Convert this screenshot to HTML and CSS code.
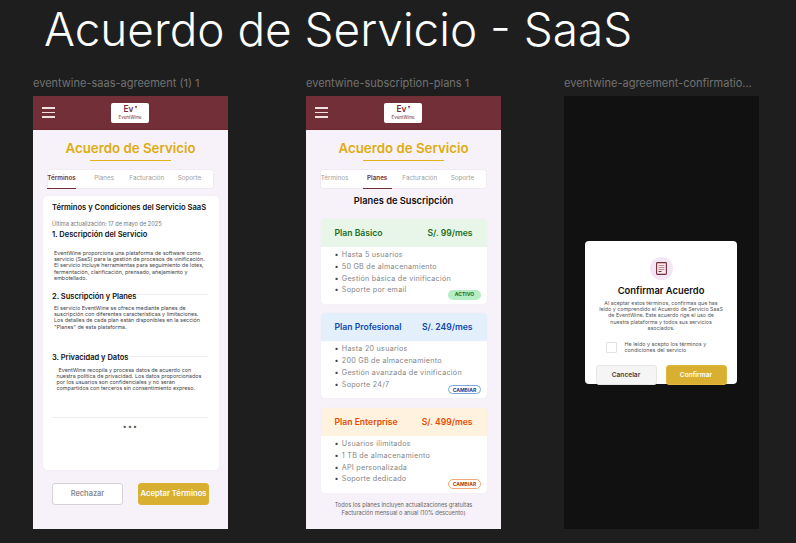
FILE: index.html
```html
<!DOCTYPE html>
<html lang="es">
<head>
<meta charset="utf-8">
<title>Acuerdo de Servicio - SaaS</title>
<link rel="stylesheet" href="styles.css">
</head>
<body>
<h1 class="page-title">Acuerdo de Servicio - SaaS</h1>

<section class="artboard board-a">
  <div class="board-label">eventwine-saas-agreement (1) 1</div>
  <div class="frame">
    <header class="topbar">
      <div class="burger"><span></span><span></span><span></span></div>
      <div class="logo"><div class="logo-ev">Ev<i></i></div><div class="logo-name">EventWine</div></div>
    </header>
    <h2 class="title">Acuerdo de Servicio</h2>
    <div class="rule"></div>
    <nav class="tabs">
      <span class="tab on">Términos</span><span class="tab">Planes</span><span class="tab">Facturación</span><span class="tab">Soporte</span>
    </nav>
    <article class="terms">
      <h3 class="terms-title">Términos y Condiciones del Servicio SaaS</h3>
      <p class="updated">Última actualización: 17 de mayo de 2025</p>
      <h4 class="sec sec-1">1. Descripción del Servicio</h4>
      <p class="para para-1">EventWine proporciona una plataforma de software como servicio (SaaS) para la gestión de procesos de vinificación. El servicio incluye herramientas para seguimiento de lotes, fermentación, clarificación, prensado, añejamiento y embotellado.</p>
      <div class="divider div-2"></div>
      <h4 class="sec sec-2">2. Suscripción y Planes</h4>
      <p class="para para-2">El servicio EventWine se ofrece mediante planes de suscripción con diferentes características y limitaciones. Los detalles de cada plan están disponibles en la sección "Planes" de esta plataforma.</p>
      <div class="divider div-3"></div>
      <h4 class="sec sec-3">3. Privacidad y Datos</h4>
      <p class="para para-3"><span class="indent">EventWine recopila y procesa datos de acuerdo con</span> nuestra política de privacidad. Los datos proporcionados por los usuarios son confidenciales y no serán compartidos con terceros sin consentimiento expreso.</p>
      <div class="divider div-4"></div>
      <div class="dots">•••</div>
    </article>
    <div class="actions">
      <button class="btn btn-reject">Rechazar</button>
      <button class="btn btn-accept">Aceptar Términos</button>
    </div>
  </div>
</section>

<section class="artboard board-b">
  <div class="board-label">eventwine-subscription-plans 1</div>
  <div class="frame">
    <header class="topbar">
      <div class="burger"><span></span><span></span><span></span></div>
      <div class="logo"><div class="logo-ev">Ev<i></i></div><div class="logo-name">EventWine</div></div>
    </header>
    <h2 class="title">Acuerdo de Servicio</h2>
    <div class="rule"></div>
    <nav class="tabs">
      <span class="tab">Términos</span><span class="tab on">Planes</span><span class="tab">Facturación</span><span class="tab">Soporte</span>
    </nav>
    <h3 class="plans-title">Planes de Suscripción</h3>

    <div class="plan">
      <div class="plan-head green"><span>Plan Básico</span><span>S/. 99/mes</span></div>
      <ul class="plan-list">
        <li>Hasta 5 usuarios</li><li>50 GB de almacenamiento</li><li>Gestión básica de vinificación</li><li>Soporte por email</li>
      </ul>
      <span class="badge active">ACTIVO</span>
    </div>
    <div class="plan">
      <div class="plan-head blue"><span>Plan Profesional</span><span>S/. 249/mes</span></div>
      <ul class="plan-list">
        <li>Hasta 20 usuarios</li><li>200 GB de almacenamiento</li><li>Gestión avanzada de vinificación</li><li>Soporte 24/7</li>
      </ul>
      <span class="badge change-blue">CAMBIAR</span>
    </div>
    <div class="plan">
      <div class="plan-head orange"><span>Plan Enterprise</span><span>S/. 499/mes</span></div>
      <ul class="plan-list">
        <li>Usuarios ilimitados</li><li>1 TB de almacenamiento</li><li>API personalizada</li><li>Soporte dedicado</li>
      </ul>
      <span class="badge change-orange">CAMBIAR</span>
    </div>
    <p class="plans-note">Todos los planes incluyen actualizaciones gratuitas<br>Facturación mensual o anual (10% descuento)</p>
  </div>
</section>

<section class="artboard board-c">
  <div class="board-label">eventwine-agreement-confirmatio...</div>
  <div class="frame dark">
    <div class="modal">
      <div class="modal-icon">
        <svg width="11" height="13" viewBox="0 0 11 13" aria-hidden="true">
          <rect x="0.6" y="0.6" width="9.8" height="11.8" rx="0.8" fill="#f6e9f4" stroke="#722f37" stroke-width="1.1"/>
          <rect x="2.6" y="3" width="5.8" height="1" fill="#b98a90"/>
          <rect x="2.6" y="5" width="5.8" height="1" fill="#b98a90"/>
          <rect x="2.6" y="7" width="5.8" height="1" fill="#b98a90"/>
          <rect x="2.6" y="9" width="3" height="1" fill="#722f37"/>
        </svg>
      </div>
      <h3 class="modal-title">Confirmar Acuerdo</h3>
      <p class="modal-text">Al aceptar estos términos, confirmas que has leído y comprendido el Acuerdo de Servicio SaaS de EventWine. Este acuerdo rige el uso de nuestra plataforma y todos sus servicios asociados.</p>
      <label class="check-row"><span class="check"></span><span class="check-text">He leído y acepto los términos y condiciones del servicio</span></label>
      <div class="modal-actions">
        <button class="btn btn-cancel">Cancelar</button>
        <button class="btn btn-confirm">Confirmar</button>
      </div>
    </div>
  </div>
</section>
</body>
</html>
```
FILE: styles.css
```css
* { box-sizing: border-box; }
html, body { margin: 0; height: 100%; }
body {
  position: relative;
  width: 796px;
  height: 543px;
  overflow: hidden;
  background: #1e1e1e;
  font-family: "Inter", "Liberation Sans", sans-serif;
  color: #111;
}
h1, h2, h3, h4, p, ul { margin: 0; padding: 0; }

.page-title {
  padding: 5px 0 0 44px;
  font-size: 45.9px;
  line-height: 50px;
  font-weight: 300;
  color: #fff;
  white-space: nowrap;
}

/* artboards sit on a free canvas */
.artboard { position: absolute; top: 76px; width: 195px; }
.board-a { left: 33px; }
.board-b { left: 306px; }
.board-c { left: 564px; }
.board-label {
  height: 20px;
  font-size: 11px;
  line-height: 14px;
  color: #727272;
  white-space: nowrap;
}
.frame {
  display: flex;
  flex-direction: column;
  align-items: center;
  height: 433px;
  background: #f7f2fa;
}
.frame.dark { background: #111; justify-content: center; padding-right: 1px; }

.topbar {
  align-self: stretch;
  display: flex;
  align-items: center;
  height: 34px;
  padding-left: 9px;
  background: #722f37;
  border-bottom: 1px solid #6a2a32;
  flex: none;
}
.burger { display: flex; flex-direction: column; gap: 2.8px; width: 12.5px; }
.burger span { height: 1.5px; background: #f1e0e0; }
.logo {
  width: 38px;
  height: 20px;
  margin-left: 56.5px;
  background: #fff;
  border-radius: 2px;
  text-align: center;
  color: #722f37;
}
.logo-ev { font-size: 8.4px; line-height: 11px; font-weight: 600; padding-top: 1px; height: 12.5px; }
.logo-ev i {
  display: inline-block;
  width: 0; height: 0;
  margin-left: 1px;
  vertical-align: 3px;
  border-left: 1.7px solid transparent;
  border-right: 1.7px solid transparent;
  border-top: 3px solid #722f37;
}
.logo-name { font-size: 4.6px; line-height: 6px; font-weight: 400; }

.title {
  margin-top: 10px;
  font-size: 13.3px;
  line-height: 16px;
  font-weight: 600;
  color: #deac12;
  white-space: nowrap;
}
.rule { width: 81px; height: 1.2px; margin-top: 3.5px; background: #dfb21e; flex: none; }

.tabs {
  display: flex;
  justify-content: space-between;
  width: 167px;
  height: 20px;
  margin-top: 8.3px;
  padding: 0 9px 0 0;
  background: #fff;
  border: 1px solid #efebf1;
  border-radius: 3px;
  flex: none;
}
.tab {
  width: 29px;
  margin-left: -1px;
  text-align: center;
  font-size: 6.3px;
  line-height: 16px;
  color: #a0a0a0;
  white-space: nowrap;
  display: flex;
  justify-content: center;
}
.tab.on { color: #722f37; font-weight: 600; border-bottom: 1px solid #722f37; height: 19px; }

/* agreement card */
.terms {
  width: 176px;
  height: 274px;
  margin-top: 7px;
  padding: 7px 9.5px 0;
  background: #fff;
  border-radius: 4px;
  box-shadow: 0 0 1px rgba(0,0,0,.12);
  flex: none;
}
.terms-title { font-size: 7.6px; line-height: 10px; font-weight: 600; white-space: nowrap; }
.updated { margin-top: 7px; font-size: 5.6px; line-height: 8px; color: #777; white-space: nowrap; }
.sec { font-size: 7.5px; line-height: 10px; font-weight: 600; white-space: nowrap; }
.sec-1 { margin-top: 2px; }
.para { font-size: 5.4px; line-height: 6.2px; color: #444; }
.para-1 { margin-top: 10px; padding-left: 2px; width: 153px; }
.para-2 { margin-top: 3px; padding-left: 2px; width: 153px; }
.para-3 { margin-top: 4px; padding-left: 4.5px; width: 150px; }
.indent { padding-left: 2px; }
.divider { width: 156px; height: 1px; background: #f0edf2; }
.div-2 { margin-top: 13px; margin-bottom: -3px; }
.div-3 { margin-top: 26px; margin-bottom: -4px; }
.div-4 { margin-top: 25px; }
.dots { margin-top: 4px; text-align: center; font-size: 7px; line-height: 9px; letter-spacing: 1.2px; color: #555; }

.actions { display: flex; gap: 15px; margin-top: 13px; flex: none; }
.btn {
  height: 22px;
  padding: 0;
  border-radius: 3px;
  font-family: inherit;
  font-weight: 600;
  white-space: nowrap;
}
.btn-reject { width: 71px; background: #fff; border: 1px solid #d5d3d6; color: #8a8a8a; font-size: 7.4px; }
.btn-accept { width: 71px; background: #d8af30; border: 1px solid #dcb233; color: #fff; font-size: 7.7px; }

/* plans */
.plans-title { margin-top: 6.5px; font-size: 9.3px; line-height: 12px; font-weight: 600; white-space: nowrap; }
.plan {
  position: relative;
  width: 166px;
  height: 85px;
  margin-top: 9.5px;
  background: #fff;
  border-radius: 4px;
  box-shadow: 0 0 1px rgba(0,0,0,.1);
  overflow: hidden;
  flex: none;
}
.plans-title + .plan { margin-top: 11.5px; }
.plan-head {
  display: flex;
  justify-content: space-between;
  align-items: center;
  height: 28px;
  padding: 0 14px;
  font-size: 8.6px;
  font-weight: 600;
  white-space: nowrap;
}
.green { background: #e8f5e9; color: #1b6e20; }
.blue { background: #e3f0fb; color: #0d47b0; }
.orange { background: #fff3e0; color: #e64a00; }
.plan-list { padding: 2px 0 0 14px; list-style: none; }
.plan-list li {
  height: 11.8px;
  font-size: 7.2px;
  line-height: 11.8px;
  letter-spacing: 0.25px;
  color: #858585;
  white-space: nowrap;
}
.plan-list li::before { content: "•"; margin-right: 3px; color: #444; }
.badge {
  position: absolute;
  right: 5.5px;
  bottom: 4px;
  width: 33px;
  height: 9.5px;
  border-radius: 5px;
  text-align: center;
  font-size: 5px;
  line-height: 8px;
  font-weight: 700;
}
.active { background: #b5edc5; color: #1b6e20; line-height: 9.5px; }
.change-blue { background: #fff; border: 1px solid #7aa5e0; color: #16408f; }
.change-orange { background: #fff; border: 1px solid #f3a67c; color: #b83a00; }
.plans-note {
  margin-top: 7.7px;
  text-align: center;
  font-size: 5.7px;
  line-height: 8.6px;
  color: #666;
  white-space: nowrap;
}

/* modal */
.modal {
  display: flex;
  flex-direction: column;
  align-items: center;
  width: 152px;
  height: 143px;
  padding-top: 16px;
  background: #fff;
  border-radius: 4px;
  flex: none;
}
.modal-icon {
  display: flex;
  align-items: center;
  justify-content: center;
  width: 23px;
  height: 23px;
  border-radius: 50%;
  background: #f4e7f5;
  flex: none;
}
.modal-title { margin-top: 5px; font-size: 9.4px; line-height: 12px; font-weight: 600; white-space: nowrap; }
.modal-text {
  width: 126px;
  margin-top: 3px;
  text-align: center;
  font-size: 5.3px;
  line-height: 6.2px;
  color: #555;
}
.check-row { display: flex; align-items: center; gap: 7.5px; align-self: flex-start; margin: 10px 0 0 21px; }
.check { width: 11px; height: 11px; border: 1px solid #e3e1e4; border-radius: 1px; background: #fff; flex: none; }
.check-text { width: 92px; font-size: 5.4px; line-height: 6px; color: #555; }
.modal-actions { display: flex; gap: 9px; margin-top: 12px; flex: none; }
.btn-cancel { width: 61px; height: 20px; background: #f5f5f5; border: 1px solid #e6e6e6; color: #444; font-size: 6.6px; }
.btn-confirm { width: 61px; height: 20px; background: #d8af30; border: 1px solid #e0b83c; color: #fff; font-size: 6.6px; }
```
